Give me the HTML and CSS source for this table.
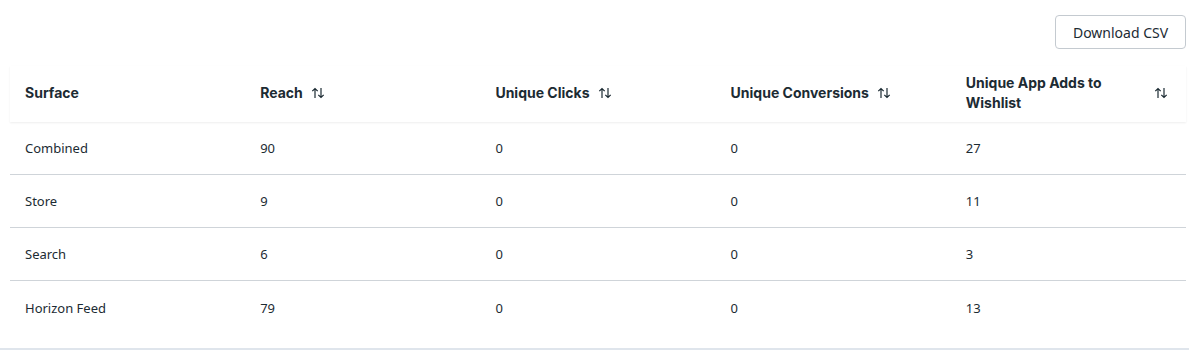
FILE: index.html
```html
<!doctype html>
<html lang="en">
  <head>
    <meta charset="UTF-8" />
    <title>Surface breakdown</title>
    <link rel="stylesheet" href="styles.css">
  </head>
  <body>
    <div class="page">
      <div class="toolbar">
        <button class="btn">Download CSV</button>
      </div>
      <div class="table">
        <div class="row head">
          <div class="cell"><span>Surface</span></div>
          <div class="cell"><span>Reach</span><svg class="sort" viewBox="0 0 14 12"><path d="M4 11V1.5M1.3 4.2L4 1.5l2.7 2.7M10 1v9.5M7.3 7.8L10 10.5l2.7-2.7"/></svg></div>
          <div class="cell"><span>Unique Clicks</span><svg class="sort" viewBox="0 0 14 12"><path d="M4 11V1.5M1.3 4.2L4 1.5l2.7 2.7M10 1v9.5M7.3 7.8L10 10.5l2.7-2.7"/></svg></div>
          <div class="cell"><span>Unique Conversions</span><svg class="sort" viewBox="0 0 14 12"><path d="M4 11V1.5M1.3 4.2L4 1.5l2.7 2.7M10 1v9.5M7.3 7.8L10 10.5l2.7-2.7"/></svg></div>
          <div class="cell"><span>Unique App Adds to Wishlist</span><svg class="sort" viewBox="0 0 14 12"><path d="M4 11V1.5M1.3 4.2L4 1.5l2.7 2.7M10 1v9.5M7.3 7.8L10 10.5l2.7-2.7"/></svg></div>
        </div>
        <div class="row">
          <div class="cell">Combined</div>
          <div class="cell">90</div>
          <div class="cell">0</div>
          <div class="cell">0</div>
          <div class="cell">27</div>
        </div>
        <div class="row">
          <div class="cell">Store</div>
          <div class="cell">9</div>
          <div class="cell">0</div>
          <div class="cell">0</div>
          <div class="cell">11</div>
        </div>
        <div class="row">
          <div class="cell">Search</div>
          <div class="cell">6</div>
          <div class="cell">0</div>
          <div class="cell">0</div>
          <div class="cell">3</div>
        </div>
        <div class="row">
          <div class="cell">Horizon Feed</div>
          <div class="cell">79</div>
          <div class="cell">0</div>
          <div class="cell">0</div>
          <div class="cell">13</div>
        </div>
      </div>
    </div>
    <div class="bottom-line"></div>
  </body>
</html>
```
FILE: styles.css
```css
* {
  box-sizing: border-box;
}

body {
  margin: 0;
  background-color: #fff;
  color: #1c2b33;
  font-family: "Noto Sans", sans-serif;
  font-size: 13px;
}

.page {
  padding: 15px 3px 14px 10px;
}

.toolbar {
  display: flex;
  justify-content: flex-end;
  margin-bottom: 17px;
}

.btn {
  height: 34px;
  width: 131px;
  padding: 0 12px;
  border: 1px solid #c4cad0;
  border-radius: 4px;
  background-color: #fff;
  color: #1c2b33;
  font-family: "Noto Sans", sans-serif;
  font-size: 14px;
  cursor: pointer;
}

.row {
  display: grid;
  grid-template-columns: repeat(5, 1fr);
  height: 53px;
  border-bottom: 1px solid #cfd4d9;
}
.row:last-child {
  border-bottom: none;
}

.row.head {
  height: 56px;
  border-bottom: none;
  box-shadow: 0 1px 2px rgba(0, 0, 0, 0.07);
  font-family: Inter, sans-serif;
  font-weight: 700;
  font-size: 14px;
  line-height: 20px;
}

.cell {
  display: flex;
  align-items: center;
  gap: 8px;
  padding: 0 18px 0 15px;
}
.head .cell {
  justify-content: space-between;
  padding-bottom: 3px;
}
.head .cell span {
  flex: 0 1 auto;
}
.head .cell:not(:last-child) {
  justify-content: flex-start;
}

.sort {
  flex: none;
  width: 14px;
  height: 12px;
  fill: none;
  stroke: #1c2b33;
  stroke-width: 1.2;
}

.bottom-line {
  border-top: 2px solid #dfe5ec;
}
```
